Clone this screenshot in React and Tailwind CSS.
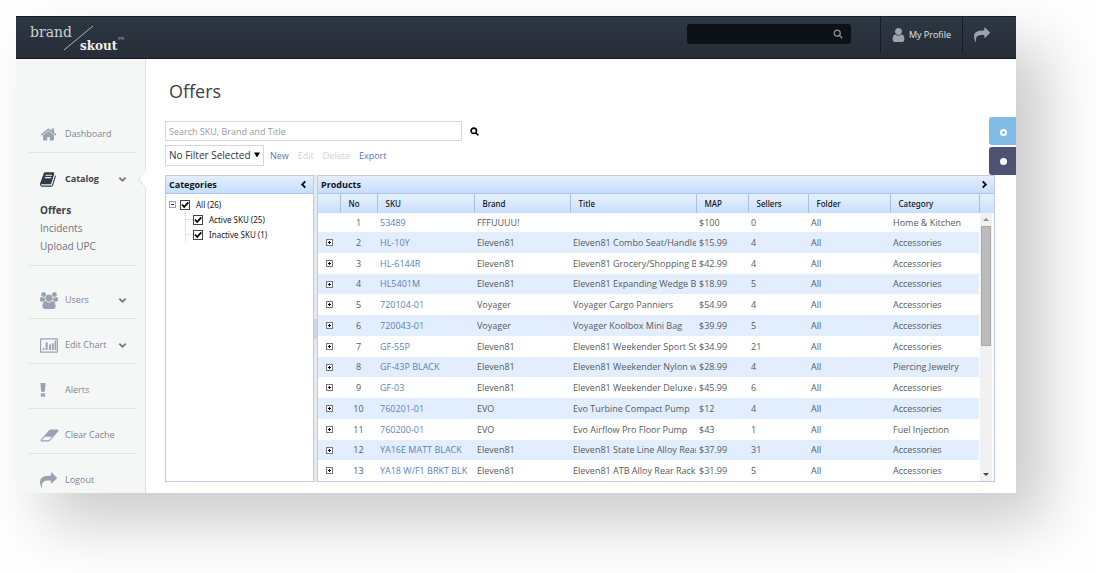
import React from "react";

const PATHS = {
  home: {
    box: "0 0 1792 1792",
    d: "M1472 992v480q0 26-19 45t-45 19h-384v-384h-256v384h-384q-26 0-45-19t-19-45v-480q0-1 .5-3t.5-3l575-474 575 474q1 2 1 6zm223-69l-62 74q-8 9-21 11h-3q-13 0-21-7l-692-577-692 577q-12 8-24 7-13-2-21-11l-62-74q-8-10-7-23.500t11-21.500l719-599q32-26 76-26t76 26l244 204v-195q0-14 9-23t23-9h192q14 0 23 9t9 23v408l219 182q10 8 11 21.500t-7 23.500z",
  },
  book: {
    box: "0 0 1792 1792",
    d: "M1639 478q40 57 18 129l-275 906q-19 64-76.500 107.500t-122.500 43.500h-923q-77 0-148.500-53.500t-99.500-131.500q-24-67-2-127 0-4 3-27t4-37q1-8-3-21.500t-3-19.500q2-11 8-21t16.500-23.500 16.500-23.500q23-38 45-91.500t30-91.500q3-10 .5-30t-.5-28q3-11 17-28t17-23q21-36 42-92t25-90q1-9-2.500-32t.5-28q4-13 22-30.500t22-22.500q19-26 42.500-84.500t27.500-96.500q1-8-3-25.500t-2-26.500q2-8 9-18t18-23 17-21q8-12 16.500-30.500t15-35 16-36 19.500-32 26.500-23.500 36-11.500 47.500 5.500l-1 3q38-9 51-9h761q74 0 114 56t18 130l-274 906q-36 119-71.500 153.500t-128.500 34.500h-869q-27 0-38 15-11 16-1 43 24 70 144 70h923q29 0 56-15.500t35-41.500l300-987q7-22 5-57 38 15 59 43zm-1064 2q-4 13 2 22.500t20 9.500h608q13 0 25.500-9.500t16.500-22.500l21-64q4-13-2-22.500t-20-9.500h-608q-13 0-25.500 9.500t-16.500 22.500zm-83 256q-4 13 2 22.500t20 9.500h608q13 0 25.500-9.500t16.500-22.500l21-64q4-13-2-22.500t-20-9.500h-608q-13 0-25.500 9.500t-16.500 22.500z",
  },
  users: {
    box: "0 0 1920 1792",
    d: "M593 896q-162 5-265 128h-134q-82 0-138-40.500t-56-118.500q0-353 124-353 6 0 43.500 21t97.500 42.500 119 21.500q67 0 133-23-5 37-5 66 0 139 81 256zm1071 637q0 120-73 189.500t-194 69.500h-874q-121 0-194-69.500t-73-189.500q0-53 3.500-103.500t14-109 26.500-108.500 43-97.500 62-81 85.500-53.500 111.500-20q10 0 43 21.500t73 48 107 48 135 21.500 135-21.500 107-48 73-48 43-21.500q61 0 111.500 20t85.500 53.500 62 81 43 97.500 26.500 108.500 14 109 3.500 103.500zm-1024-1277q0 106-75 181t-181 75-181-75-75-181 75-181 181-75 181 75 75 181zm704 384q0 159-112.500 271.500t-271.500 112.500-271.500-112.500-112.500-271.500 112.500-271.500 271.500-112.500 271.500 112.500 112.500 271.500zm576 225q0 78-56 118.500t-138 40.500h-134q-103-123-265-128 81-117 81-256 0-29-5-66 66 23 133 23 59 0 119-21.500t97.500-42.500 43.500-21q124 0 124 353zm-128-609q0 106-75 181t-181 75-181-75-75-181 75-181 181-75 181 75 75 181z",
  },
  chart: {
    box: "0 0 20 16",
    d: "M1 0h18a1 1 0 0 1 1 1v14a1 1 0 0 1-1 1H1a1 1 0 0 1-1-1V1a1 1 0 0 1 1-1zm.3 1.300v13.400h17.400V1.300zM3 10.500h2V13H3zm3.300-6h2.200V13H6.300zm3.700 2.500h2.200v6H10zm3.300-1.500h2V13h-2zm3-3h1.700V13h-1.700z",
  },
  alert: {
    box: "0 0 6 15",
    d: "M.8 0h4.400a.5.5 0 0 1 .5.6l-.7 8.400a.6.6 0 0 1-.6.500H1.600A.6.6 0 0 1 1 9L.3.6A.5.5 0 0 1 .8 0zM1.300 11h3.400a.6.6 0 0 1 .6.600v2.600a.6.6 0 0 1-.6.600H1.300a.6.6 0 0 1-.6-.600v-2.600a.6.6 0 0 1 .6-.600z",
  },
  eraser: {
    box: "0 0 2048 1792",
    d: "M960 1408l336-384h-768l-336 384h768zm1013-1077q15 34 9.500 71.500t-30.500 65.500l-896 1024q-38 44-96 44h-768q-38 0-69.500-20.500t-47.500-54.500q-15-34-9.500-71.500t30.500-65.500l896-1024q38-44 96-44h768q38 0 69.500 20.500t47.500 54.500z",
  },
  share: {
    box: "0 0 1792 1792",
    d: "M1792 640q0 26-19 45l-512 512q-19 19-45 19t-45-19-19-45v-256h-224q-98 0-175.500 6t-154 21.500-133 42.500-105.500 69.500-80 101-48.500 138.500-17.500 181q0 55 5 123 0 6 2.500 23.500t2.500 26.500q0 15-8.500 25t-23.500 10q-16 0-28-17-7-9-13-22t-13.500-30-10.500-24q-127-285-127-451 0-199 53-333 162-403 875-403h224v-256q0-26 19-45t45-19 45 19l512 512q19 19 19 45z",
  },
  user: {
    box: "256 128 1280 1536",
    d: "M1536 1399q0 109-62.500 187t-150.500 78h-854q-88 0-150.500-78t-62.500-187q0-85 8.500-160.500t31.500-152 58.500-131 94-89 134.500-34.500q131 128 313 128t313-128q76 0 134.500 34.500t94 89 58.500 131 31.500 152 8.500 160.500zm-256-887q0 159-112.500 271.500t-271.500 112.500-271.500-112.500-112.500-271.500 112.500-271.500 271.500-112.500 271.500 112.500 112.500 271.500z",
  },
};

function Icon({ name, className }) {
  const icon = PATHS[name];
  return (
    <svg viewBox={icon.box} className={className} fill="currentColor" fillRule={name === "chart" ? "evenodd" : "nonzero"} aria-hidden="true">
      <path d={icon.d} />
    </svg>
  );
}

function Chevron({ className }) {
  return (
    <svg viewBox="0 0 10 10" className={className} fill="none" stroke="currentColor" strokeWidth="2" aria-hidden="true">
      <path d="M1.500 3 5 6.500 8.500 3" />
    </svg>
  );
}

function Magnifier({ className, weight }) {
  return (
    <svg viewBox="0 0 10 10" className={className} fill="none" stroke="currentColor" strokeWidth={weight} aria-hidden="true">
      <circle cx="4.200" cy="4.200" r="3" />
      <path d="M6.400 6.400 9.300 9.300" />
    </svg>
  );
}

function Logo() {
  return (
    <a href="#home" aria-label="brand skout" className="block">
      <svg width="100" height="34" viewBox="0 0 100 34" fontFamily="'DejaVu Serif', serif" aria-hidden="true">
        <text x="0" y="17" fontSize="14" fill="#c9d0d6">brand</text>
        <path d="M34 30 63 6" stroke="#a9b2ba" strokeWidth="1" />
        <text x="50" y="30" fontSize="12" fontWeight="bold" fill="#eef1f4">skout</text>
        <text x="87" y="23" fontSize="8" fill="#c9d0d6">™</text>
      </svg>
    </a>
  );
}

function TopBar() {
  return (
    <header className="flex h-[43px] items-start justify-between border-y border-[#161c26] bg-gradient-to-b from-[#2c3842] to-[#282c39] pl-[14px]">
      <div className="pt-[3px]"><Logo /></div>
      <div className="flex">
        <form className="mt-[7px] mr-[29px] flex h-5 w-[164px] items-center rounded-[3px] bg-[#0c1118] pr-2">
          <input aria-label="Search site" className="h-full min-w-0 flex-1 bg-transparent px-2 text-[9px] text-white outline-none" />
          <button type="button" aria-label="Search">
            <Magnifier className="size-[10px] text-[#8b949d]" weight="1.300" />
          </button>
        </form>
        <a href="#profile" className="flex h-9 items-center gap-1 border-l border-[#151b24] px-[11px] text-[9px] text-[#e3e7ea]">
          <Icon name="user" className="h-[14px] w-[13px] text-[#9ba4ad]" />
          My Profile
        </a>
        <a href="#share" aria-label="Share" className="flex h-9 items-center border-l border-[#151b24] pr-[26px] pl-[11px] text-[#9ba4ad]">
          <Icon name="share" className="size-4" />
        </a>
      </div>
    </header>
  );
}

function NavItem({ icon, label, size, chevron, active }) {
  return (
    <a
      href={"#" + label.toLowerCase().replace(" ", "-")}
      className={active ? "flex h-[18px] items-center text-[9px] font-bold text-[#3c434d]" : "flex h-[18px] items-center text-[9px] text-[#7f858f]"}
    >
      <span className={active ? "flex w-[25px] shrink-0 text-[#2e3a48]" : "flex w-[25px] shrink-0 text-[#9ba2b1]"}>
        <Icon name={icon} className={size} />
      </span>
      <span className="flex-1">{label}</span>
      {chevron && <Chevron className="mr-[9px] size-[9px] text-[#6f7681]" />}
    </a>
  );
}

const SUB_LINKS = ["Incidents", "Upload UPC"];

function Sidebar() {
  const row = "border-b border-[#dfe1e4] pt-[17px] pb-[9px] pl-[11px]";
  return (
    <nav className="relative w-[130px] shrink-0 border-r border-[#dfe2ea] bg-[#f5f6f6] pt-[49px] pr-[9px] pl-[13px]">
      <ul>
        <li className={row}><NavItem icon="home" label="Dashboard" size="size-[17px]" /></li>
        <li className="border-b border-[#dfe1e4] pt-[17px] pb-[10px] pl-[11px]">
          <NavItem icon="book" label="Catalog" size="size-[17px]" chevron active />
          <ul className="mt-[13px] text-[10px] leading-[18px] text-[#6e747d]">
            <li><a href="#offers" className="font-bold text-[#3c434d]">Offers</a></li>
            {SUB_LINKS.map((s) => (
              <li key={s}><a href={"#" + s}>{s}</a></li>
            ))}
          </ul>
        </li>
        <li className="border-b border-[#dfe1e4] pt-[25px] pb-[9px] pl-[11px]">
          <NavItem icon="users" label="Users" size="h-[17px] w-[18px]" chevron />
        </li>
        <li className={row}><NavItem icon="chart" label="Edit Chart" size="h-[15px] w-[18px]" chevron /></li>
        <li className={row}><NavItem icon="alert" label="Alerts" size="h-[14px] w-[6px]" /></li>
        <li className={row}><NavItem icon="eraser" label="Clear Cache" size="h-[17px] w-[19px]" /></li>
        <li className="pt-[17px] pl-[11px]"><NavItem icon="share" label="Logout" size="size-[17px]" /></li>
      </ul>
      <svg viewBox="0 0 8 18" className="absolute top-[111px] -right-px h-[18px] w-2" aria-hidden="true">
        <path d="M8 0 1 9 8 18z" fill="#fff" />
        <path d="M7.500 .5 1 9 7.500 17.500" fill="none" stroke="#dfe2ea" />
      </svg>
    </nav>
  );
}

function TreeCheck({ id, label }) {
  return (
    <span className="flex h-[15px] items-center gap-[6px]">
      <span className="relative flex size-[10px]">
        <input id={id} type="checkbox" defaultChecked className="peer size-[10px] appearance-none border border-[#3f454d] bg-white" />
        <svg viewBox="0 0 10 10" className="pointer-events-none absolute inset-0 hidden size-[10px] peer-checked:block" fill="none" stroke="#000" strokeWidth="1.800" aria-hidden="true">
          <path d="M2 4.500 4.200 7 8.300 2.400" />
        </svg>
      </span>
      <label htmlFor={id}>{label}</label>
    </span>
  );
}

function PanelTitle({ title, side }) {
  return (
    <div className="flex h-[18px] items-center justify-between border-b border-[#a9c4e6] bg-gradient-to-b from-[#e6eefa] to-[#c5deff] pr-[5px] pl-[3px]">
      <h2 className="text-[9px] font-bold text-[#10151c]">{title}</h2>
      <button type="button" aria-label={"Toggle " + title}>
        <Chevron className={side === "left" ? "size-[9px] rotate-90 text-black" : "size-[9px] -rotate-90 text-black"} />
      </button>
    </div>
  );
}

function Categories() {
  return (
    <section className="w-[149px] shrink-0 border border-[#bccbe0] bg-white">
      <PanelTitle title="Categories" side="left" />
      <div className="pt-[3px] pl-[3px] font-['Noto_Sans','Open_Sans',sans-serif] text-[8px] text-[#15181c]">
        <div className="flex items-center gap-1">
          <button type="button" aria-label="Collapse All" className="flex size-[7px] items-center justify-center border border-[#9aa1aa] bg-white">
            <span className="h-px w-[3px] bg-[#333]" />
          </button>
          <TreeCheck id="cat-all" label="All (26)" />
        </div>
        <ul className="ml-4 border-l border-dotted border-[#cfcfcf]">
          <li className="flex items-center"><span className="w-[7px] border-t border-dotted border-[#cfcfcf]" /><TreeCheck id="cat-active" label="Active SKU (25)" /></li>
          <li className="flex items-center"><span className="w-[7px] border-t border-dotted border-[#cfcfcf]" /><TreeCheck id="cat-inactive" label="Inactive SKU (1)" /></li>
        </ul>
      </div>
    </section>
  );
}

const ROWS = [
  ["53489", "FFFUUUU!", "", "$100", 0, "Home & Kitchen"],
  ["HL-10Y", "Eleven81", "Eleven81 Combo Seat/Handle", "$15.99", 4, "Accessories"],
  ["HL-6144R", "Eleven81", "Eleven81 Grocery/Shopping B", "$42.99", 4, "Accessories"],
  ["HL5401M", "Eleven81", "Eleven81 Expanding Wedge B", "$18.99", 5, "Accessories"],
  ["720104-01", "Voyager", "Voyager Cargo Panniers", "$54.99", 4, "Accessories"],
  ["720043-01", "Voyager", "Voyager Koolbox Mini Bag", "$39.99", 5, "Accessories"],
  ["GF-55P", "Eleven81", "Eleven81 Weekender Sport St", "$34.99", 21, "Accessories"],
  ["GF-43P BLACK", "Eleven81", "Eleven81 Weekender Nylon w", "$28.99", 4, "Piercing Jewelry"],
  ["GF-03", "Eleven81", "Eleven81 Weekender Deluxe A", "$45.99", 6, "Accessories"],
  ["760201-01", "EVO", "Evo Turbine Compact Pump", "$12", 4, "Accessories"],
  ["760200-01", "EVO", "Evo Airflow Pro Floor Pump", "$43", 1, "Fuel Injection"],
  ["YA16E MATT BLACK", "Eleven81", "Eleven81 State Line Alloy Rear", "$37.99", 31, "Accessories"],
  ["YA18 W/F1 BRKT BLK", "Eleven81", "Eleven81 ATB Alloy Rear Rack", "$31.99", 5, "Accessories"],
];

function Products() {
  const th = "border-l border-[#a9c0de] pl-[8px] text-left font-medium";
  const td = "overflow-hidden pl-[3px] whitespace-nowrap";
  return (
    <section className="min-w-0 flex-1 border border-[#bccbe0] bg-white">
      <PanelTitle title="Products" side="right" />
      <div className="flex">
        <table className="w-full min-w-0 flex-1 table-fixed border-collapse text-[9px] leading-3 text-[#555b62]">
          <colgroup>
            <col className="w-[22px]" />
            <col className="w-[37px]" />
            <col className="w-[97px]" />
            <col className="w-[96px]" />
            <col />
            <col className="w-[52px]" />
            <col className="w-[60px]" />
            <col className="w-[82px]" />
            <col className="w-[89px]" />
          </colgroup>
          <thead className="bg-gradient-to-b from-[#e8f1fd] to-[#c7dffe] font-['Noto_Sans','Open_Sans',sans-serif] text-[8px] text-[#10151c]">
            <tr className="h-[19px]">
              <th aria-label="Expand" />
              <th className={th}>No</th>
              <th className={th}>SKU</th>
              <th className={th}>Brand</th>
              <th className={th}>Title</th>
              <th className={th}>MAP</th>
              <th className={th}>Sellers</th>
              <th className={th}>Folder</th>
              <th className={th}>Category</th>
            </tr>
          </thead>
          <tbody>
            {ROWS.map(([sku, brand, title, map, sellers, category], i) => (
              <tr key={sku} className="h-[21px] first:h-[19px] even:bg-[#e2edfd] nth-[4n]:h-5">
                <td className="pl-[8px]">
                  {i > 0 && (
                    <button type="button" aria-label={"Expand " + sku} className="flex size-[7px] items-center justify-center border border-[#777] bg-white">
                      <svg viewBox="0 0 3 3" className="size-[3px] shrink-0" fill="#000" shapeRendering="crispEdges" aria-hidden="true">
                        <path d="M1 0h1v3H1zM0 1h3v1H0z" />
                      </svg>
                    </button>
                  )}
                </td>
                <td className="text-center">{i + 1}</td>
                <td className={td}><a href={"#" + sku} className="text-[#5b84bb]">{sku}</a></td>
                <td className={td}>{brand}</td>
                <td className={td}>{title}</td>
                <td className={td}>{map}</td>
                <td className={td}>{sellers}</td>
                <td className={td}>All</td>
                <td className={td}>{category}</td>
              </tr>
            ))}
          </tbody>
        </table>
        <div className="flex w-[15px] shrink-0 flex-col">
          <div className="h-[19px] border-l border-[#a9c0de] bg-gradient-to-b from-[#e8f1fd] to-[#c7dffe]" />
          <div className="mr-[2px] ml-px flex flex-1 flex-col items-center bg-[#f1f1f1] py-[5px]">
            <svg viewBox="0 0 6 3" className="h-[3px] w-[6px]" aria-hidden="true"><path d="M0 3 3 0 6 3z" fill="#8f8f8f" /></svg>
            <div className="mt-[5px] h-[120px] w-[10px] border border-[#a8a8a8] bg-[#bcbcbc]" />
            <svg viewBox="0 0 6 3" className="mt-auto h-[3px] w-[6px]" aria-hidden="true"><path d="M0 0 3 3 6 0z" fill="#444" /></svg>
          </div>
        </div>
      </div>
    </section>
  );
}

function Toolbar() {
  return (
    <>
      <div className="mt-[18px] flex items-center gap-2">
        <input
          aria-label="Search SKU, Brand and Title"
          placeholder="Search SKU, Brand and Title"
          className="h-5 w-[297px] border border-[#d3d7da] px-[3px] text-[9px] text-[#444] outline-none placeholder:text-[#9b9b9b]"
        />
        <button type="button" aria-label="Search products">
          <Magnifier className="size-[9px] text-black" weight="1.800" />
        </button>
      </div>
      <div className="mt-1 flex items-center text-[9px] text-[#5379b5]">
        <div className="relative mr-[6px]">
          <select aria-label="Filter" className="h-[21px] w-[99px] appearance-none border border-[#d3d7da] bg-white pl-[3px] text-[10px] text-[#2d3238]">
            <option>No Filter Selected</option>
          </select>
          <svg viewBox="0 0 6 6" className="pointer-events-none absolute top-[7px] right-[4px] size-[6px]" aria-hidden="true"><path d="M0 .5h6L3 5.500z" fill="#000" /></svg>
        </div>
        <div className="flex gap-[9px]">
          <button type="button">New</button>
          <button type="button" disabled className="text-[#d0d2d4]">Edit</button>
          <button type="button" disabled className="text-[#d0d2d4]">Delete</button>
          <button type="button">Export</button>
        </div>
      </div>
    </>
  );
}

function SideTabs() {
  return (
    <div className="absolute top-[58px] right-0 flex flex-col gap-[2px]">
      <button type="button" aria-label="Theme" className="flex h-7 w-[27px] items-center justify-center rounded-l-[3px] bg-[#80bce6] pt-[3px] pl-[2px]">
        <span className="size-[7px] rounded-full border-2 border-white" />
      </button>
      <button type="button" aria-label="Layout" className="flex h-7 w-[27px] items-center justify-center rounded-l-[3px] bg-[#4f5172] pl-[2px]">
        <span className="size-[7px] rounded-full bg-white" />
      </button>
    </div>
  );
}

export default function App() {
  return (
    <div className="bg-[#fefefe] pt-4 pr-20 pb-20 pl-4 font-['Open_Sans',sans-serif]">
      <div className="bg-white shadow-[30px_30px_55px_rgba(0,0,0,0.2)]">
        <TopBar />
        <div className="flex">
          <Sidebar />
          <main className="relative min-w-0 flex-1 pt-5 pr-[21px] pb-[11px] pl-[19px]">
            <h1 className="pl-1 text-[18px] leading-6 text-[#3a4047]">Offers</h1>
            <Toolbar />
            <div className="mt-[9px] flex">
              <Categories />
              <div className="flex w-[3px] items-center bg-[#e6eaf0]"><span className="h-5 w-full bg-[#cdd6e2]" /></div>
              <Products />
            </div>
            <SideTabs />
          </main>
        </div>
      </div>
    </div>
  );
}
